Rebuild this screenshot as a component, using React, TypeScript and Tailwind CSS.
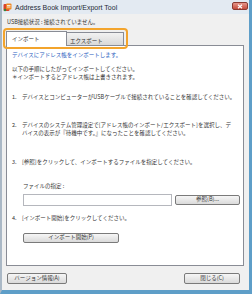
export default function App() {
  const jp = "font-['Noto_Sans_CJK_JP','Noto_Sans',sans-serif]";
  const btn =
    "flex items-center justify-center rounded-[2px] border border-[#7a7a7a] bg-gradient-to-b from-[#f6f6f6] to-[#dadada] text-[5.5px] leading-none text-[#333]";

  return (
    <div className="w-[252px] h-[294px] flex flex-col bg-[#e3eaf2] border-l-2 border-l-[#aab8c6] border-r-[3px] border-r-[#5e9ec8] border-b-4 border-b-[#5e9ec8] overflow-hidden">
      {/* title bar */}
      <div className="h-[14px] flex items-center relative">
        <svg width="9" height="9" viewBox="0 0 9 9" className="ml-[1px]">
          <rect x="0.5" y="1" width="6" height="7" rx="1" fill="#d9432b" />
          <rect x="3" y="0.5" width="5.5" height="6" rx="1" fill="#f08a24" />
          <path d="M4 2.5h3.5M4 4h3.5" stroke="#fff" strokeWidth="0.8" />
          <circle cx="2" cy="7" r="1.2" fill="#2f8a3c" />
        </svg>
        <span className="ml-[3px] text-[7px] leading-none text-[#1e2a38] font-['Liberation_Sans',Arial,sans-serif]">
          Address Book Import/Export Tool
        </span>
        <div className="absolute right-[1px] top-[2px] w-[16px] h-[8px] rounded-[2px] border border-[#8a3a32] bg-gradient-to-b from-[#e6958a] to-[#c44a3c] flex items-center justify-center">
          <svg width="6" height="5" viewBox="0 0 6 5">
            <path d="M1 0.8l4 3.4M5 0.8l-4 3.4" stroke="#fff" strokeWidth="1.2" />
          </svg>
        </div>
      </div>

      {/* body */}
      <div className={`flex-1 bg-[#f0f0f0] relative pl-[4px] pr-[5px] flex flex-col ${jp}`}>
        <div className="mt-[4px] ml-[1px] text-[5.5px] leading-[8px] text-[#333]">
          USB接続状況 : 接続されていません。
        </div>

        {/* tabs */}
        <div className="mt-[5px] flex items-end h-[14px]">
          <div className="relative z-10 -mb-px w-[61px] h-[15px] bg-white border border-b-0 border-[#898c95] pl-[5px] pt-[3px] text-[5.5px] leading-[8px] text-[#333]">
            インポート
          </div>
          <div className="w-[57px] h-[13px] border border-l-0 border-b-0 border-[#898c95] bg-gradient-to-b from-[#f2f2f2] to-[#d9d9d9] pl-[3px] pt-[4px] text-[5.5px] leading-[8px] text-[#333]">
            エクスポート
          </div>
        </div>

        {/* panel */}
        <div className="h-[221px] bg-white border border-[#898c95] pl-[5px] pt-[5px] text-[5.5px] leading-[8px] text-[#333] whitespace-nowrap">
          <div className="text-[#2a5cc0]">デバイスにアドレス帳をインポートします。</div>
          <div className="mt-[6px]">以下の手順にしたがってインポートしてください。</div>
          <div>＊インポートするとアドレス帳は上書きされます。</div>

          <div className="mt-[12px] flex">
            <span className="w-[10px]">1.</span>
            <span>デバイスとコンピューターがUSBケーブルで接続されていることを確認してください。</span>
          </div>

          <div className="mt-[20px] flex">
            <span className="w-[10px]">2.</span>
            <span>
              デバイスのシステム管理設定で[アドレス帳のインポート/エクスポート]を選択し、デ
              <br />
              バイスの表示が『待機中です。』になったことを確認してください。
            </span>
          </div>

          <div className="mt-[21px] flex">
            <span className="w-[10px]">3.</span>
            <span>[参照]をクリックして、インポートするファイルを指定してください。</span>
          </div>

          <div className="mt-[16px] ml-[11px]">ファイルの指定 :</div>
          <div className="mt-[4px] ml-[11px] flex items-center">
            <div className="w-[149px] h-[12px] bg-white border border-[#b5b7bd]" />
            <div className={`${btn} ml-[3px] w-[65px] h-[10px]`}>参照(B)...</div>
          </div>

          <div className="mt-[8px] flex">
            <span className="w-[10px]">4.</span>
            <span>[インポート開始]をクリックしてください。</span>
          </div>
          <div className={`${btn} mt-[11px] ml-[11px] w-[96px] h-[10px]`}>インポート開始(P)</div>
        </div>

        {/* footer buttons */}
        <div className="mt-[7px] flex justify-between pl-[1px] pr-[4px]">
          <div className={`${btn} w-[60px] h-[11px]`}>バージョン情報(A)</div>
          <div className={`${btn} w-[56px] h-[11px]`}>閉じる(C)</div>
        </div>

        {/* orange highlight around tabs */}
        <div className="absolute left-[1px] top-[14px] w-[125px] h-[21px] rounded-[4px] border-2 border-[#f3a42c] pointer-events-none" />
      </div>
    </div>
  );
}
